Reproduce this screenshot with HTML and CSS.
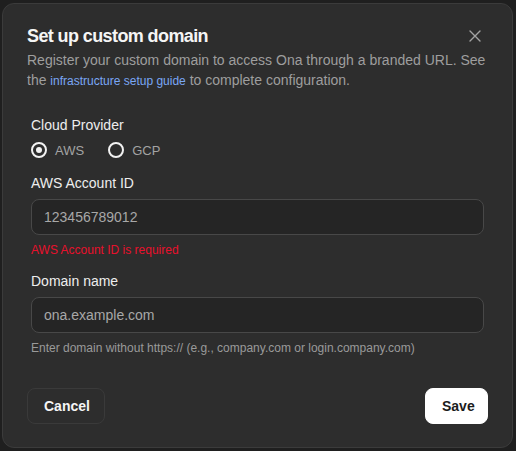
FILE: index.html
```html
<!DOCTYPE html>
<html>
<head>
<meta charset="utf-8">
<link rel="stylesheet" href="styles.css">
</head>
<body>
<div class="dialog">
  <div class="header">
    <div class="title-row">
      <h2 class="title">Set up custom domain</h2>
      <button class="close" aria-label="Close">
        <svg width="12" height="12" viewBox="0 0 12 12"><path d="M1 1L11 11M11 1L1 11" stroke="#a3a3a3" stroke-width="1.4" stroke-linecap="round"/></svg>
      </button>
    </div>
    <p class="desc"><span>Register your custom domain to access Ona through a branded URL. See</span> <span>the</span> <a class="link" href="#">infrastructure setup guide</a> <span>to complete configuration.</span></p>
  </div>
  <div class="form">
    <div class="group">
      <div class="label">Cloud Provider</div>
      <div class="radios">
        <label class="radio"><span class="circle checked"></span><span class="radio-text">AWS</span></label>
        <label class="radio"><span class="circle"></span><span class="radio-text">GCP</span></label>
      </div>
    </div>
    <div class="group">
      <div class="label">AWS Account ID</div>
      <div class="input">123456789012</div>
      <div class="msg error">AWS Account ID is required</div>
    </div>
    <div class="group">
      <div class="label">Domain name</div>
      <div class="input">ona.example.com</div>
      <div class="msg hint">Enter domain without https:// (e.g., company.com or login.company.com)</div>
    </div>
  </div>
  <div class="footer">
    <button class="btn cancel">Cancel</button>
    <button class="btn save">Save</button>
  </div>
</div>
</body>
</html>
```
FILE: styles.css
```css
* { box-sizing: border-box; }
html, body { margin: 0; padding: 0; }
body {
  background: #1f1f1f;
  font-family: "Liberation Sans", Arial, sans-serif;
  width: 516px;
  height: 451px;
  overflow: hidden;
}
.dialog {
  margin: 3px 0 0 2px;
  width: 511px;
  height: 445px;
  background: #2d2d2d;
  border: 1px solid #3b3b3b;
  border-radius: 12px;
  padding: 20px 24px 0 24px;
  display: flex;
  flex-direction: column;
}
.title-row {
  display: flex;
  align-items: center;
  justify-content: space-between;
  height: 24px;
}
.title {
  margin: 0;
  font-size: 18px;
  line-height: 24px;
  font-weight: 700;
  color: #f5f5f5;
  letter-spacing: -0.6px;
}
.close {
  width: 20px;
  height: 20px;
  padding: 0;
  margin-right: 3px;
  border: none;
  background: none;
  display: flex;
  align-items: center;
  justify-content: center;
}
.desc {
  margin: 2px 0 0 0;
  font-size: 14px;
  line-height: 20px;
  color: #9e9e9e;
}
.link {
  color: #7aa7f5;
  text-decoration: none;
  font-size: 12px;
  line-height: 16px;
}
.form {
  padding: 0 4px;
  margin-top: 25px;
  display: flex;
  flex-direction: column;
  gap: 13px;
}
.group {
  display: flex;
  flex-direction: column;
}
.label {
  font-size: 14px;
  line-height: 20px;
  font-weight: 500;
  color: #ededed;
}
.radios {
  margin-top: 5px;
  display: flex;
  gap: 24px;
  height: 20px;
  align-items: center;
}
.radio {
  display: flex;
  align-items: center;
  gap: 8px;
}
.circle {
  width: 16px;
  height: 16px;
  border: 2px solid #f2f2f2;
  border-radius: 50%;
  display: flex;
  align-items: center;
  justify-content: center;
}
.circle.checked::after {
  content: "";
  width: 6px;
  height: 6px;
  border-radius: 50%;
  background: #f2f2f2;
}
.radio-text {
  font-size: 13px;
  color: #a3a3a3;
}
.input {
  margin-top: 6px;
  height: 36px;
  border: 1px solid #484848;
  border-radius: 8px;
  background: #252525;
  padding: 0 12px;
  display: flex;
  align-items: center;
  font-size: 14px;
  color: #a8a8a8;
}
.msg {
  margin-top: 7px;
  font-size: 12px;
  line-height: 16px;
}
.error { color: #e8102c; }
.hint { color: #9a9a9a; }
.footer {
  margin-top: 32px;
  display: flex;
  justify-content: space-between;
}
.btn {
  height: 36px;
  border-radius: 8px;
  font-family: inherit;
  font-size: 14px;
  font-weight: 700;
  padding: 0 16px;
}
.cancel {
  width: 78px;
  background: #2d2d2d;
  border: 1px solid #3a3a3a;
  color: #f5f5f5;
}
.save {
  width: 63px;
  background: #ffffff;
  border: 1px solid #ffffff;
  color: #1c1c1c;
}
```
